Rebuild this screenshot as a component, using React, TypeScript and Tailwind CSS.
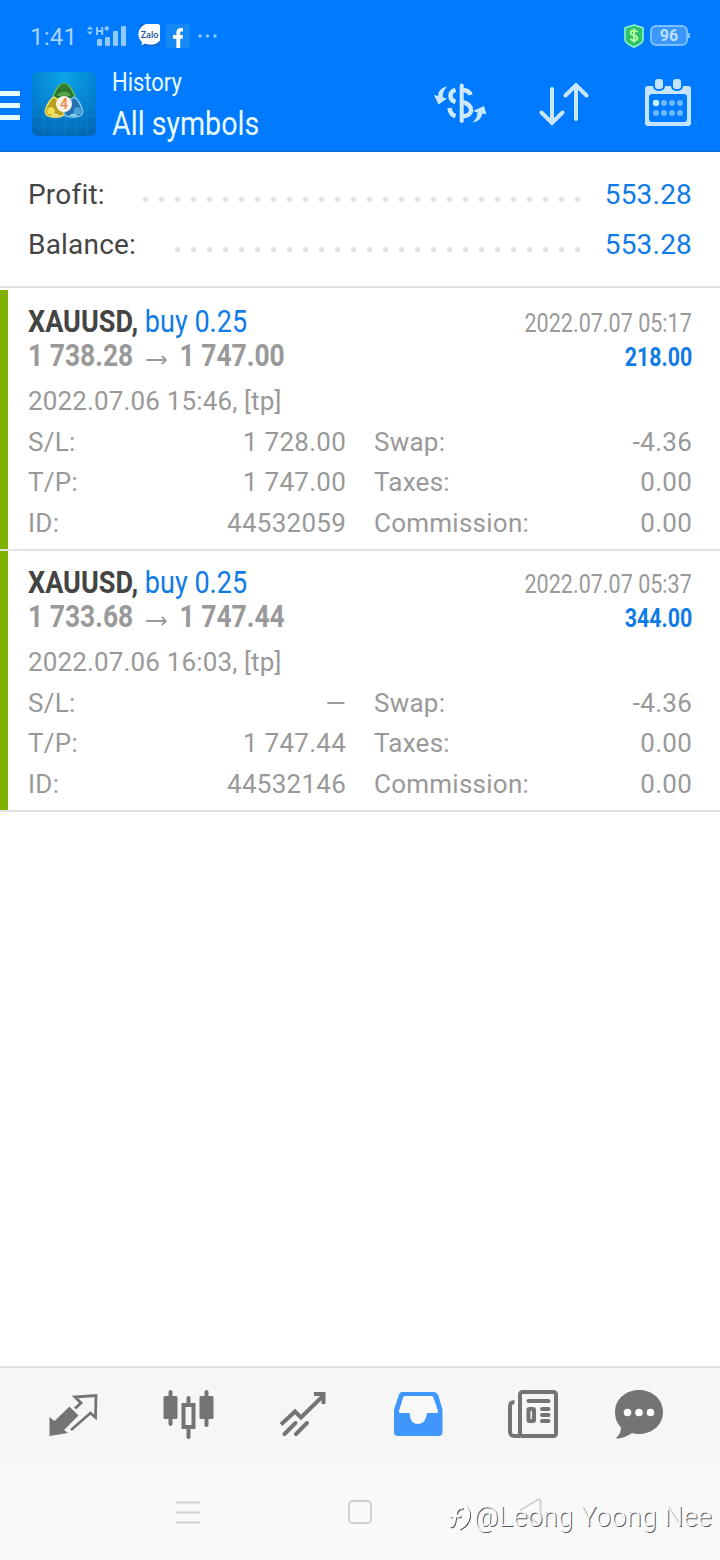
import type { ReactNode } from "react"

type Deal = {
  symbol: string
  side: string
  open: string
  close: string
  closedAt: string
  profit: string
  openedAt: string
  rows: string[][]
}

const deals: Deal[] = [
  {
    symbol: "XAUUSD,",
    side: "buy 0.25",
    open: "1 738.28",
    close: "1 747.00",
    closedAt: "2022.07.07 05:17",
    profit: "218.00",
    openedAt: "2022.07.06 15:46, [tp]",
    rows: [
      ["S/L:", "1 728.00", "Swap:", "-4.36"],
      ["T/P:", "1 747.00", "Taxes:", "0.00"],
      ["ID:", "44532059", "Commission:", "0.00"],
    ],
  },
  {
    symbol: "XAUUSD,",
    side: "buy 0.25",
    open: "1 733.68",
    close: "1 747.44",
    closedAt: "2022.07.07 05:37",
    profit: "344.00",
    openedAt: "2022.07.06 16:03, [tp]",
    rows: [
      ["S/L:", "—", "Swap:", "-4.36"],
      ["T/P:", "1 747.44", "Taxes:", "0.00"],
      ["ID:", "44532146", "Commission:", "0.00"],
    ],
  },
]

function StatusBar() {
  return (
    <div className="flex h-[68px] items-start pl-[30px] pr-[30px] pt-[22px] text-[#a5d5ff]">
      <div className="w-[57px] pt-px text-[24px] leading-[28px] tracking-[0.2px]">1:41</div>
      <svg className="mt-[2px]" width="40" height="24" viewBox="0 0 40 24" fill="#8fcaff">
        <path d="M0 5.500 3 2l3 3.500zM0 7.500h6L3 11z" />
        <path d="M10 3v8M15.200 3v8M10 7h5.200M17.500 4.500h4.500M19.750 2.300v4.500" stroke="#8fcaff" strokeWidth="2" />
        <rect x="10" y="15" width="5" height="7" rx="1" />
        <rect x="18" y="13" width="5" height="9" rx="1" />
        <rect x="26" y="7" width="5" height="15" rx="1" />
        <rect x="34" y="2" width="5" height="20" rx="1" />
      </svg>
      <svg className="ml-[11px] mt-[2px]" width="22" height="22" viewBox="0 0 22 22">
        <path d="M2 0h18a2 2 0 0 1 2 2v18a2 2 0 0 1-2 2H5z" fill="#1467d2" />
        <path d="M8 0h12a2 2 0 0 1 2 2v14.500c-3 4.500-11 5-15 3-1 .9-2.500 1.300-4 1.200.8-.8 1.200-1.600 1-2.700C-1.500 13.500-1 3.500 8 0z" fill="#fff" />
        <text x="11.500" y="14" textAnchor="middle" fontSize="9" fontWeight="500" fill="#1d4f9c">Zalo</text>
      </svg>
      <svg className="ml-[6px] mt-[2px]" width="24" height="24" viewBox="0 0 24 24">
        <rect width="24" height="24" rx="2" fill="#1589f3" />
        <path d="M10.400 24v-9.200H7V11h3.400V8.500c0-3 1.800-4.600 4.400-4.600H17v3.600h-1.600c-1 0-1.200.6-1.200 1.400V11H17l-.5 3.800h-2.300V24z" fill="#fff" />
      </svg>
      <svg className="ml-[8px] mt-[12px]" width="20" height="4" viewBox="0 0 20 4" fill="#8fcaff">
        <circle cx="2" cy="2" r="1.700" />
        <circle cx="9.500" cy="2" r="1.700" />
        <circle cx="17" cy="2" r="1.700" />
      </svg>
      <svg className="ml-auto mt-[2px]" width="20" height="24" viewBox="0 0 20 24">
        <path d="M10 1 19 3.800V16c0 3-4.500 5-9 7.200C5.500 21 1 19 1 16V3.800z" fill="#2fc46c" stroke="#8df5c9" strokeWidth="1.600" />
        <path d="M13.200 8.300c-.4-1.300-1.600-1.900-3.200-1.900-1.900 0-3.200 1-3.200 2.500 0 3.400 6.500 1.700 6.500 5.200 0 1.600-1.400 2.500-3.300 2.500-1.800 0-3.100-.8-3.400-2.200M10 4.500v14" fill="none" stroke="#b9ff9e" strokeWidth="1.900" />
      </svg>
      <div className="ml-[6px] mt-[3px] flex h-[21px] w-[38px] items-center justify-center rounded-[6px] border-2 border-[#79bfff] bg-[#3d97fb] text-[16px] font-bold leading-none text-[#b9e2ff]">
        96
      </div>
      <div className="mt-[11px] h-[5px] w-[2px] bg-[#79bfff]" />
    </div>
  )
}

function AppLogo() {
  return (
    <svg width="64" height="64" viewBox="0 0 64 64">
      <defs>
        <radialGradient id="tile" cx="50%" cy="10%" r="95%">
          <stop offset="0" stopColor="#0ba5ea" />
          <stop offset="0.500" stopColor="#0484d2" />
          <stop offset="1" stopColor="#0367b5" />
        </radialGradient>
      </defs>
      <rect width="64" height="64" rx="5" fill="url(#tile)" />
      <path d="M11 0v64M22 0v64M33 0v64M44 0v64M55 0v64M0 11h64M0 22h64M0 33h64M0 44h64M0 55h64" stroke="#2fa8ea" strokeWidth="0.600" opacity="0.350" />
      <path d="M21 26c1-6 4-10 7-13 2-2 6-2 8 0 3 3 6 7 7 13l-11 5z" fill="#23752f" stroke="#6cb84a" strokeWidth="1.600" />
      <path d="M22 25c-5 3-7 8-8.500 13-.8 3 1 6 4 6.500 5 1.200 10 1.500 14-1.500V32z" fill="#b89f1d" stroke="#e8dc62" strokeWidth="1.600" />
      <path d="M42 25c5 3 7 8 8.500 13 .8 3-1 6-4 6.500-5 1.200-10 1.500-14-1.500V32z" fill="#2271b1" stroke="#74c2e8" strokeWidth="1.600" />
      <circle cx="32" cy="15.500" r="3.800" fill="#2f7d33" />
      <path d="M25 24c1-3.500 4-4.500 7-4.500s6 1 7 4.500z" fill="#57a044" />
      <circle cx="19" cy="39" r="3.800" fill="#f3df55" />
      <path d="M19 45c0-3.500 5-5 9-1z" fill="#efe27a" />
      <circle cx="45.500" cy="39" r="3.800" fill="#4aa1dc" />
      <path d="M37 44c3-4 8-3 9 1z" fill="#8cd0ee" />
      <circle cx="32" cy="32" r="8" fill="#fbf1e6" />
      <text x="32" y="37" textAnchor="middle" fontSize="14" fontWeight="500" fill="#ee8445">4</text>
    </svg>
  )
}

function Header() {
  return (
    <div className="flex h-[84px] items-start text-[#e9fbff]">
      <div className="mt-[23px] flex w-5 flex-col gap-[7px]">
        <div className="h-[5px] bg-[#e4fbff]" />
        <div className="h-[5px] bg-[#e4fbff]" />
        <div className="h-[5px] bg-[#e4fbff]" />
      </div>
      <div className="ml-3 mt-1">
        <AppLogo />
      </div>
      <div className="ml-4 w-[322px] whitespace-nowrap">
        <div className="-mt-px h-[30px] origin-left scale-x-[0.845] text-[26px] leading-[30px]">History</div>
        <div className="mt-[5px] h-[42px] origin-left scale-x-[0.842] text-[34px] leading-[42px]">All symbols</div>
      </div>
      <svg className="mt-[14px]" width="54" height="44" viewBox="0 0 54 44" fill="none" stroke="#cfeaff" strokeWidth="4.500">
        <path d="M27.700 3.500v35.500" strokeLinecap="round" strokeWidth="4" />
        <path d="M36.500 13c-1-3.500-3.500-4.800-8-5M28 20c5 1 9 3.500 9 8s-3 6-9 6.500M21.500 7.800c-3.500 1-5 3-5 6s1.500 5 5 6.200M15.500 26c.5 4.500 2.500 7 6 8.200" />
        <path d="M13 4.500C7 5.500 4.500 9 4 14L0 13l4.500 9.500 8.500-6-4.300-1.300C8.700 11 10 8 13 4.500zM38.500 40.500c6-1 9-4 9.700-9l4.300.8L50 24l-11 5 4.500 1.500c0 4-2 7-5 10z" fill="#c8e8ff" stroke="none" />
      </svg>
      <svg className="ml-[51px] mt-[14px]" width="50" height="44" viewBox="0 0 50 44" fill="none" stroke="#c9e7ff" strokeWidth="4" strokeLinecap="round">
        <path d="M13 7v34M2.500 30.500 13 41l10.500-10.500M37 37V3M26.500 13.500 37 3l10.500 10.500" />
      </svg>
      <svg className="ml-[56px] mt-[10px]" width="46" height="48" viewBox="0 0 46 48">
        <path fillRule="evenodd" d="M3 8h40a3 3 0 0 1 3 3v34a3 3 0 0 1-3 3H3a3 3 0 0 1-3-3V11a3 3 0 0 1 3-3zM7 16a3 3 0 0 0-3 3v22a3 3 0 0 0 3 3h32a3 3 0 0 0 3-3V19a3 3 0 0 0-3-3z" fill="#c5e5ff" />
        <rect x="9" y="0" width="10" height="12" rx="4" fill="#c5e5ff" stroke="#007aff" strokeWidth="2" />
        <rect x="27" y="0" width="10" height="12" rx="4" fill="#c5e5ff" stroke="#007aff" strokeWidth="2" />
        <circle cx="11" cy="25" r="3.200" fill="#c5f0ff" />
        <g fill="#6fb7ff">
          <circle cx="19" cy="25" r="3" />
          <circle cx="27" cy="25" r="3" />
          <circle cx="35" cy="25" r="3" />
          <circle cx="11" cy="35" r="3" />
          <circle cx="19" cy="35" r="3" />
          <circle cx="27" cy="35" r="3" />
          <circle cx="35" cy="35" r="3" />
        </g>
      </svg>
    </div>
  )
}

function SummaryRow({ label, value, dots }: { label: string; value: string; dots: number }) {
  return (
    <div className="flex h-[50px] items-center px-7 text-[28px] tracking-[0.2px]">
      <div className="text-[#444]">{label}</div>
      <div className="ml-auto mt-[9px] flex gap-[11px]">
        {Array.from({ length: dots }, (_, i) => (
          <div key={i} className="size-[5px] rounded-full bg-[#e2e2e2]" />
        ))}
      </div>
      <div className="w-[112px] text-right text-[#0f7be6]">{value}</div>
    </div>
  )
}

function DealItem({ deal }: { deal: Deal }) {
  return (
    <div className="h-[261px] border-b-2 border-[#e2e2e2]">
      <div className="h-[259px] border-l-8 border-[#80b000] pl-5 pr-7 pt-[14px] text-[#999]">
        <div className="flex h-[34px] justify-between whitespace-nowrap text-[32px] leading-[34px]">
          <div className="origin-left scale-x-[0.845]">
            <span className="font-bold text-[#444]">{deal.symbol}</span> <span className="text-[#0f7be6]">{deal.side}</span>
          </div>
          <div className="origin-right scale-x-[0.829] pt-[2px] text-[26px]">{deal.closedAt}</div>
        </div>
        <div className="flex h-[34px] justify-between whitespace-nowrap text-[32px] font-bold leading-[34px]">
          <div className="flex origin-left scale-x-[0.826] items-center">
            {deal.open}
            <svg className="ml-[16px] mr-[14px] mt-[9px]" width="26" height="12" viewBox="0 0 26 12" fill="none" stroke="#999" strokeWidth="2">
              <path d="M0 6h24M19 2l5 4-5 4" />
            </svg>
            {deal.close}
          </div>
          <div className="origin-right scale-x-[0.82] pt-[2px] text-[26px] text-[#0f7be6]">{deal.profit}</div>
        </div>
        <div className="mt-[9px] h-[40.600px] text-[26px] leading-[41px] tracking-[0.150px]">{deal.openedAt}</div>
        {deal.rows.map(([a, b, c, d]) => (
          <div key={a} className="grid h-[40.500px] grid-cols-2 gap-7 text-[26px] leading-[40.500px] tracking-[0.250px]">
            <div className="flex justify-between">
              <span>{a}</span>
              <span>{b}</span>
            </div>
            <div className="flex justify-between">
              <span>{c}</span>
              <span>{d}</span>
            </div>
          </div>
        ))}
      </div>
    </div>
  )
}

function TabIcon({ children, className }: { children: ReactNode; className?: string }) {
  return (
    <svg className={className} width="52" height="52" viewBox="0 0 52 52" fill="none" stroke="#747474" strokeWidth="4">
      {children}
    </svg>
  )
}

function TabBar() {
  return (
    <div className="flex h-[98px] items-start border-t-2 border-[#e2e2e2] bg-[#f6f6f6] pl-12 pt-[20px]">
      <TabIcon>
        <path d="M1.500 29l5 4 15-14.500 9 9L16 42l4 3-18.500 3z" fill="#747474" stroke="none" />
        <path d="M27 20.500l6-5.500-6-6 21-1.500-.5 22-5-4.500-19.500 17" strokeWidth="2.800" />
      </TabIcon>
      <TabIcon className="ml-[62px]">
        <path d="M8.500 4v32M44.500 4v33M26.500 10v39" strokeLinecap="round" />
        <path d="M3 8h11a1.500 1.500 0 0 1 1.500 1.500v20A1.500 1.500 0 0 1 14 31H3a1.500 1.500 0 0 1-1.500-1.500v-20A1.500 1.500 0 0 1 3 8zM39 8h11a1.500 1.500 0 0 1 1.500 1.500v20A1.500 1.500 0 0 1 50 31H39a1.500 1.500 0 0 1-1.500-1.500v-20A1.500 1.500 0 0 1 39 8z" fill="#747474" stroke="none" />
        <rect x="21.500" y="17" width="10" height="22" fill="#f6f6f6" />
      </TabIcon>
      <TabIcon className="ml-[63px]">
        <path d="M4 36.500l14-13 6 6L47 7" />
        <path d="M37 6h9.500v10" />
        <path d="M7.500 46l11-11M19 46l11-11" strokeLinecap="round" />
      </TabIcon>
      <TabIcon className="ml-[63px]">
        <path d="M11 4h30c3 0 4.500 1.300 5.500 4L50 20c.4 1.300.5 2 .5 3.500V44c0 2.500-1.500 4-4 4H6c-2.500 0-4-1.500-4-4V23.500c0-1.500.1-2.200.5-3.500L6.500 8C7.500 5.300 8 4 11 4z" fill="#4097fb" stroke="none" />
        <path d="M13 8h26c1.500 0 2 .6 2.500 1.700l4.500 13c.4 1.300-.1 2.300-1.500 2.300H35l-.7 3c-1 5-4 8-8.300 8s-7.500-3-8-8l-.5-3H8.500c-1.400 0-2-1-1.500-2.300l4-13C11.500 8.600 12 8 13 8z" fill="#f9f9f9" stroke="none" />
      </TabIcon>
      <TabIcon className="ml-[63px]">
        <rect x="13" y="4" width="36" height="44" rx="2.500" />
        <path d="M13 48H7a4 4 0 0 1-4-4V18c0-2.500 1.500-4 4.500-4" />
        <path d="M21.500 13h20M35 21h6.500M35 27h6.500M35 33h6.500" strokeLinecap="round" />
        <rect x="21.500" y="21" width="5.500" height="12" rx="1" />
      </TabIcon>
      <TabIcon className="ml-[54px]">
        <path d="M26 2c13.500 0 24 9.500 24 22S39.500 46 26 46c-2.500 0-5-.3-7-1-4.500 3.500-10 5.500-16.500 5.500C6 47.500 8 44 8 39.500 4 35.500 2 30.500 2 24 2 11.500 12.500 2 26 2z" fill="#747474" stroke="none" />
        <g fill="#fff" stroke="none">
          <circle cx="14.500" cy="24.500" r="3.800" />
          <circle cx="26" cy="24.500" r="3.800" />
          <circle cx="37.500" cy="24.500" r="3.800" />
        </g>
      </TabIcon>
    </div>
  )
}

function SystemNav() {
  return (
    <div className="relative flex h-24 items-start bg-[#f9f9f9] pl-[176px] pt-9">
      <svg width="24" height="26" viewBox="0 0 24 26" stroke="#d2d2d2" strokeWidth="2">
        <path d="M0 2.500h24M0 12.500h24M0 22.500h24" />
      </svg>
      <div className="ml-[148px] h-6 w-6 rounded-[5px] border-2 border-[#cfcfcf]" />
      <svg className="ml-[146px] mt-[-3px]" width="28" height="30" viewBox="0 0 28 30" fill="none" stroke="#d2d2d2" strokeWidth="2">
        <path d="M3 13 20 2.500c1.500-.8 2.500 0 2.500 1.500v21c0 1.500-1 2.300-2.500 1.500L3 15c-1-.6-1-1.400 0-2z" />
      </svg>
      <div className="absolute right-[8px] top-[34px] flex items-center text-[#fbfbfb] [text-shadow:1px_1px_0.5px_#555]">
        <svg className="mr-[2px]" width="24" height="34" viewBox="0 0 24 34" fill="none" strokeLinecap="round">
          <g stroke="#4a4a4a" strokeWidth="2.500">
            <path d="M3 27c4 .5 4-4 5.500-12C9.500 10.500 11 8.500 14.500 9M3.500 17h9M18 7c6 6 5 17-5 22" />
          </g>
          <g stroke="#fff" strokeWidth="2.800" transform="translate(-1 -1)">
            <path d="M3 27c4 .5 4-4 5.500-12C9.500 10.500 11 8.500 14.500 9M3.500 17h9M18 7c6 6 5 17-5 22" />
          </g>
        </svg>
        <span className="text-[27px] font-light leading-[38px] tracking-[0.3px]">@Leong Yoong Nee</span>
      </div>
    </div>
  )
}

function App() {
  return (
    <div className="flex h-[1560px] w-[720px] flex-col overflow-hidden bg-white font-['Roboto',sans-serif]">
      <div className="h-[152px] border-b border-[#1268c8] bg-[#007aff]">
        <StatusBar />
        <Header />
      </div>
      <div className="mb-[2px] h-[136px] border-b-2 border-[#e2e2e2] pt-[18px]">
        <SummaryRow label="Profit:" value="553.28" dots={28} />
        <SummaryRow label="Balance:" value="553.28" dots={26} />
      </div>
      {deals.map((deal) => (
        <DealItem key={deal.closedAt} deal={deal} />
      ))}
      <div className="flex-1" />
      <TabBar />
      <SystemNav />
    </div>
  )
}
export default App
